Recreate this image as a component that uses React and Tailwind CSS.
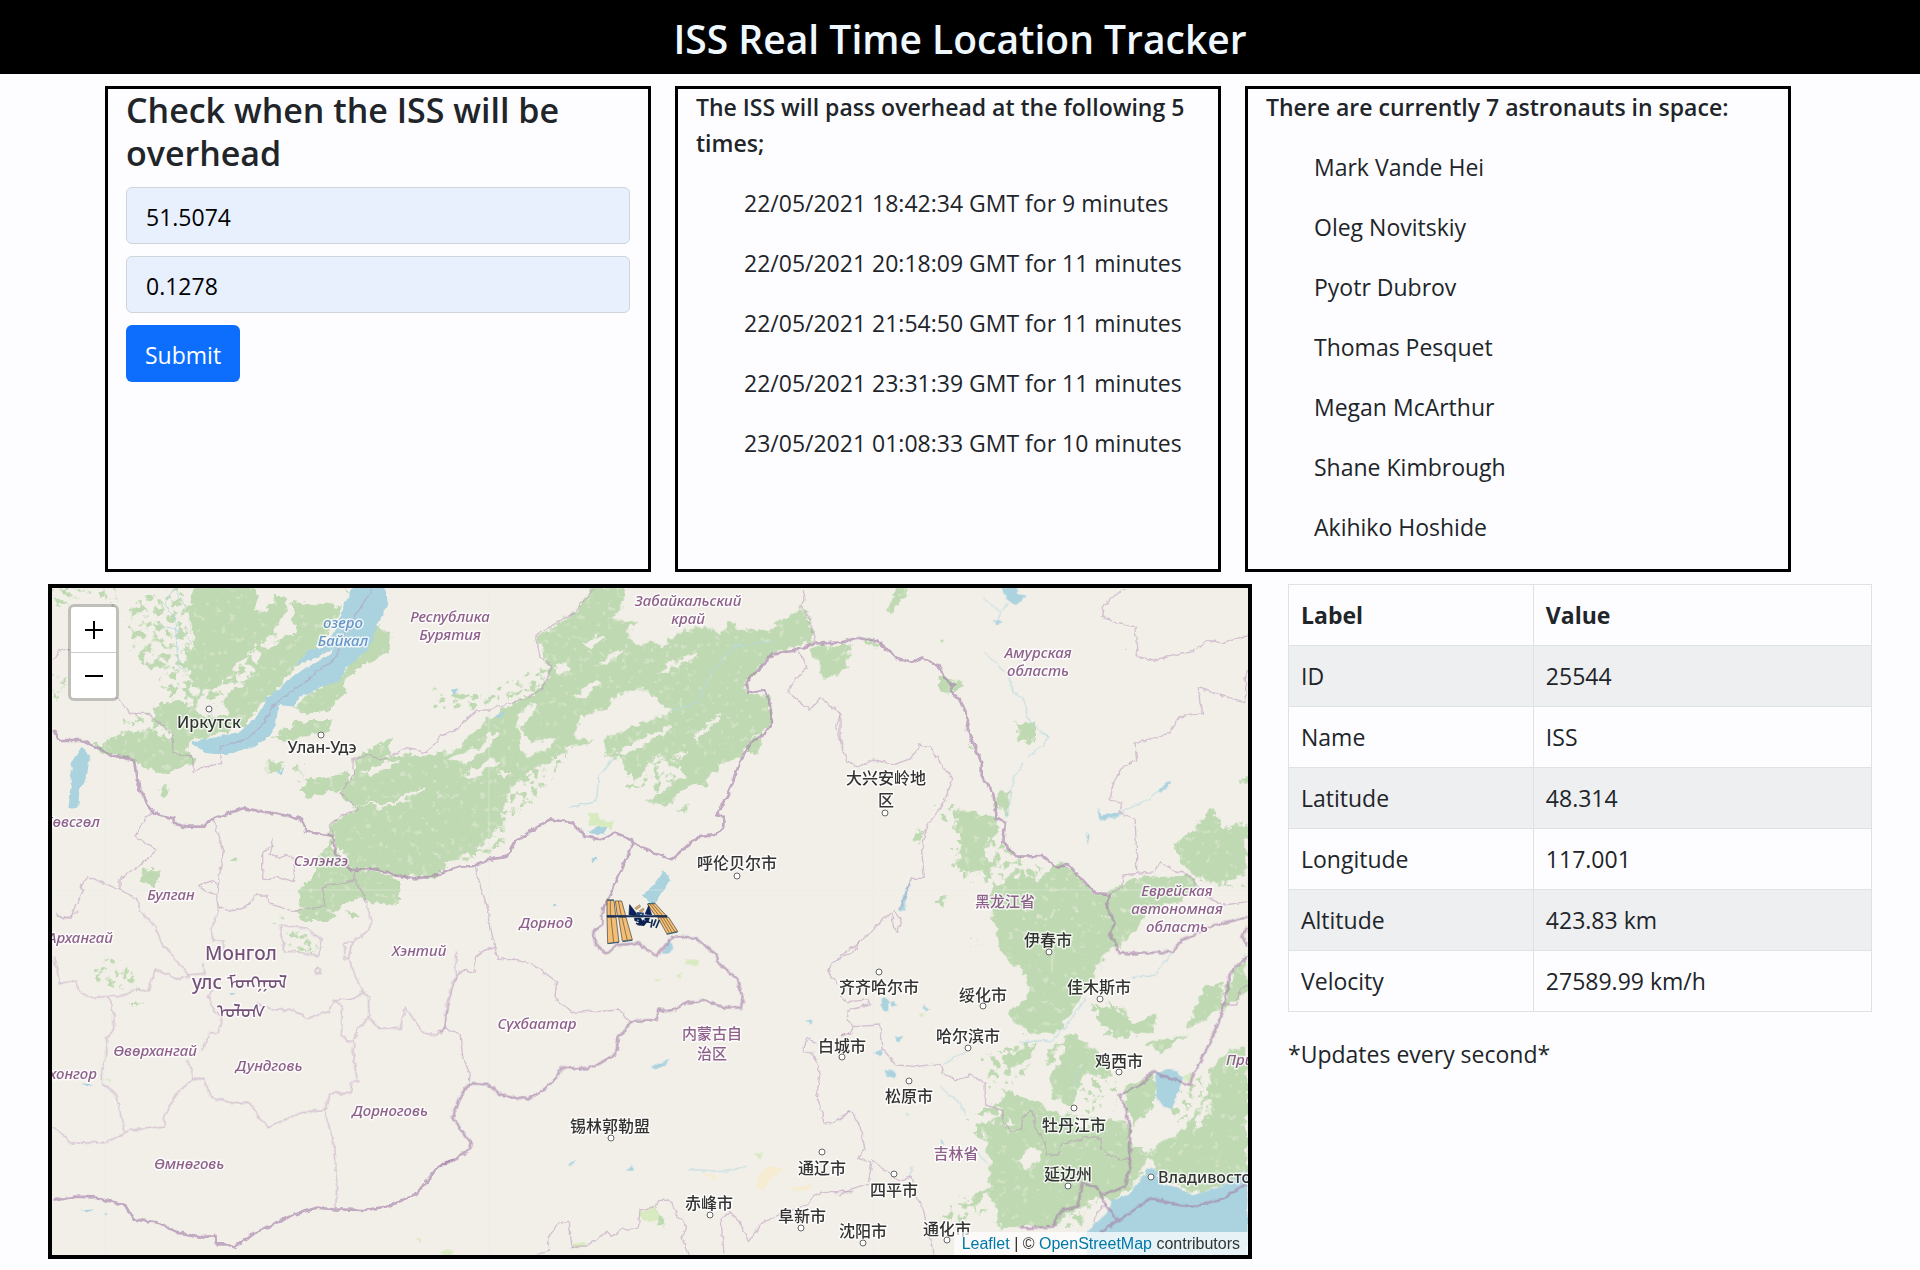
import React from "react";

const PASSES = [
  "22/05/2021 18:42:34 GMT for 9 minutes",
  "22/05/2021 20:18:09 GMT for 11 minutes",
  "22/05/2021 21:54:50 GMT for 11 minutes",
  "22/05/2021 23:31:39 GMT for 11 minutes",
  "23/05/2021 01:08:33 GMT for 10 minutes",
];

const ASTRONAUTS = [
  "Mark Vande Hei",
  "Oleg Novitskiy",
  "Pyotr Dubrov",
  "Thomas Pesquet",
  "Megan McArthur",
  "Shane Kimbrough",
  "Akihiko Hoshide",
];

const TELEMETRY = [
  ["ID", "25544"],
  ["Name", "ISS"],
  ["Latitude", "48.314"],
  ["Longitude", "117.001"],
  ["Altitude", "423.83 km"],
  ["Velocity", "27589.99 km/h"],
];

// The map is cut into six tiles; path data is in tile units, three to a map unit.
const TILES = [
  {
    x: 40,
    y: 570,
    forest:
      "M465,50 L625,50 L655,75 L640,130 L690,110 L705,75 L740,75 L745,110 L700,190 L640,230 L590,290 L560,320 L520,360 L460,350 L440,280 L470,200 L440,130Z M757,95 L905,112 L880,160 L840,230 L770,290 L720,350 L680,390 L610,460 L560,430 L560,370 L620,330 L680,240 L740,195 L768,190Z M345,410 L380,395 L440,400 L480,430 L520,445 L600,420 L650,430 L610,475 L450,510 L430,555 L400,550 L395,490 L340,450Z M160,530 L240,495 L320,480 L395,500 L400,550 L460,555 L455,580 L380,610 L310,595 L290,570 L200,550Z M985,150 L1050,185 L1045,250 L960,290 L920,330 L915,370 L860,420 L800,435 L765,410 L830,360 L900,320 L930,280Z M700,500 L780,450 L870,450 L875,485 L800,500 L730,515Z M680,575 L735,575 L700,610 L680,610Z M780,660 L800,630 L930,610 L930,650 L800,685Z M950,560 L1060,500 L1040,560 L1210,550 L1210,900 L1180,920 L1100,920 L1040,905 L940,900 L880,840 L865,770 L950,715 L900,670 L940,620Z M880,800 L830,870 L820,920 L770,960 L790,1050 L850,1050 L900,1010 L950,985 L1000,1000 L1080,1000 L1080,930 L1000,900 L930,895Z M305,900 L370,895 L360,930 L340,950 L310,940Z M355,655 L385,640 L385,675 L360,670Z M570,870 L600,862 L595,875 L572,880Z",
    sparse:
      "M270,90 L450,58 L470,330 L560,300 L640,230 L720,180 L700,300 L560,400 L440,420 L340,300 L280,240Z M38,58 L230,58 L240,100 L150,70 L60,110Z M38,310 L90,330 L60,390 L38,380Z M1180,360 L1260,390 L1260,430 L1190,410Z M240,460 L330,430 L390,480 L250,500Z M740,600 L810,580 L790,630Z M905,60 L940,60 L925,75Z",
    clearing: "M960,610 L1050,570 L1080,575 L1010,610Z M950,705 L1040,700 L1160,650 L1150,665 L1040,712Z",
    water:
      "M940,50 L1035,50 L1045,105 L1010,170 L1000,210 L985,240 L920,290 L900,330 L850,350 L775,380 L765,410 L715,405 L710,450 L690,500 L640,530 L560,555 L500,550 L450,518 L600,485 L650,440 L680,385 L740,335 L800,290 L860,260 L880,238 L800,275 L765,290 L800,245 L850,230 L880,190 L910,110Z M125,530 L150,560 L140,620 L118,660 L115,710 L85,715 L95,650 L95,575Z M712,610 L735,585 L725,612Z M1235,360 L1252,355 L1252,370 L1240,372Z",
    river: "M400,58 L375,100 L405,150 L415,290 L440,305 M355,168 L400,175 L430,190 L460,215 M410,70 L440,110 M510,425 L525,445",
    border:
      "M40,480 L55,510 L125,510 L215,555 L285,572 L298,660 L340,728 L400,745 L402,762 L445,770 L490,770 L520,745 L610,715 L690,728 L780,745 L800,785 L880,798 L885,850 L935,900 L1010,897 L1060,915 L1120,925 L1180,920 L1200,914",
    region:
      "M40,270 L55,245 L90,235 M230,380 L270,430 L325,430 L395,490 L400,550 L458,558 L460,608 L500,590 L545,580 L540,530 L610,510 L660,475 L700,405 L790,340 L890,260 L905,205 L995,58 M340,728 L315,745 L285,800 L350,840 L300,885 L240,925 L240,960 L290,985 L300,1020 M240,960 L145,920 L120,950 L130,965 L105,1010 L90,1045 L45,1035 M520,745 L535,800 L550,840 L535,940 L530,975 L535,1020 M535,940 L515,932 L475,945 L490,960 L530,975 M535,1010 L585,1025 L630,1000 L650,975 L680,975 L685,1000 L755,1022 L855,1010 L845,950 L895,940 L940,930 L945,900 M695,805 L700,825 L668,850 L668,930 L715,920 L760,935 L765,870 L740,855 L715,865 L690,850 L700,825 M943,930 L970,970 L985,1020 M885,798 L865,770 L900,740 L955,715 L900,670 L945,610 L935,570 L990,555 L1020,570 L1100,535 L1160,548 L1200,500",
  },
  {
    x: 440,
    y: 570,
    forest:
      "M460,50 L555,50 L550,110 L510,150 L585,150 L565,200 L600,235 L630,210 L660,235 L710,190 L790,170 L840,190 L880,155 L900,180 L990,175 L1080,110 L1110,150 L1120,215 L1000,250 L920,335 L925,370 L990,375 L990,470 L920,525 L900,570 L850,570 L790,650 L730,650 L690,705 L620,695 L680,650 L740,620 L700,570 L640,560 L590,640 L540,570 L500,555 L490,510 L560,480 L690,425 L620,360 L540,365 L500,420 L420,440 L400,500 L470,515 L390,530 L330,570 L250,620 L210,660 L180,770 L90,850 L0,890 L-20,895 L-20,550 L60,520 L130,460 L200,410 L310,350 L330,290 L290,200 L400,130Z M1110,230 L1235,225 L1220,300 L1150,330 L1140,290Z M920,525 L965,500 L955,545 L920,545Z M715,715 L745,710 L730,725Z",
    clearing:
      "M20,570 L120,530 L160,480 L180,490 L130,550 L60,580Z M70,620 L150,560 L180,575 L100,630Z M400,380 L470,330 L490,340 L420,385Z M230,440 L270,400 L290,410 L240,480 L270,520 L350,500 L340,530 L270,560 L240,550Z M520,545 L640,490 L680,470 L690,480 L560,555Z M645,575 L690,570 L695,600 L670,620Z M170,600 L210,605 L190,630Z M0,520 L60,500 L90,480 L50,540 L0,550Z M830,430 L850,435 L840,445Z M340,290 L380,280 L390,300 L350,310Z M430,220 L480,190 L490,205 L445,240Z M480,275 L550,235 L555,245 L490,285Z M640,310 L740,260 L770,245 L770,260 L690,300Z M700,555 L740,540 L720,570Z M760,500 L830,440 L835,448 L770,515Z",
    sparse:
      "M0,370 L150,380 L250,320 L330,300 L310,360 L120,410 L0,400Z M240,640 L420,520 L330,640 L280,700 L200,760 L200,830 L100,870 L0,890 L90,830 L180,780Z M620,300 L760,270 L700,340Z M560,560 L850,560 L780,640 L580,660Z M350,290 L520,180 L500,300 L400,380Z M0,560 L200,560 L60,640 L0,640Z",
    scrub: "M445,730 L475,730 L480,750 L520,755 L515,778 L450,765Z",
    water:
      "M672,900 L690,930 L640,1005 L608,975 L640,945Z M445,785 L480,768 L502,772 L490,795 L450,790Z M455,860 L472,865 L460,880Z M165,440 L200,420 L180,445Z M340,1000 L355,1006 L340,1010Z",
    river: "M385,712 L470,695 L475,620 L520,565 M700,420 L770,400 L820,300 L880,230 L1000,212",
    border:
      "M0,908 L60,890 L105,888 L145,870 L200,860 L225,815 L270,785 L330,748 L400,760 L435,800 L480,808 L525,788 L575,808 L580,820 L650,852 L695,868 L770,803 L825,795 L850,770 L850,738 L830,732 L865,670 L895,590 L925,525 L990,475 L995,440 L985,375 L965,360 L925,368 L920,335 L1000,250 L1060,243 L1130,220 L1200,218 M580,820 L512,970 L487,1020",
    region:
      "M0,498 L50,480 L110,420 L150,420 L200,400 L260,385 L310,355 L335,290 L300,260 L285,195 L400,130 L460,58 M105,888 L125,960 L145,1020 M1090,58 L1095,90 L1085,110 L1110,150 L1125,215 M1075,245 L1100,290 L1040,365 L1080,395 L1110,420 L1140,383 L1200,430 L1190,470 L1200,520",
  },
  {
    x: 840,
    y: 570,
    forest:
      "M180,50 L205,58 L160,125 L140,120Z M0,220 L35,225 L10,300 L0,300Z M70,210 L130,225 L110,235 L70,220Z M295,320 L370,340 L330,370 L300,365Z M530,460 L585,455 L585,515 L535,510Z M480,660 L510,670 L500,740 L465,700Z M385,515 L405,535 L390,540Z M345,720 L470,740 L470,790 L430,830 L445,900 L380,905 L350,890 L370,820 L350,780Z M1000,830 L1070,770 L1110,715 L1150,770 L1222,760 L1222,900 L1150,940 L1090,930 L1040,900Z M460,960 L550,910 L600,930 L650,880 L700,900 L760,970 L800,980 L800,1050 L470,1050 L440,1000Z M800,970 L900,920 L1060,920 L1080,960 L1000,1000 L860,1050 L800,1050Z M855,230 L870,238 L858,243Z M1195,630 L1222,615 L1222,640 L1205,640Z M240,775 L260,775 L235,815 L220,805Z",
    sparse:
      "M300,720 L360,710 L480,800 L560,880 L620,900 L560,960 L460,960 L340,890 L360,800Z M280,990 L330,980 L320,1010Z M1080,930 L1222,900 L1222,960Z M295,210 L320,215 L310,225Z",
    water:
      "M485,50 L530,50 L535,75 L558,80 L525,105 L500,90Z M770,715 L785,735 L840,728 L835,742 L780,752Z M955,665 L990,628 L992,640 L965,668Z M740,785 L750,800 L742,825Z M215,925 L200,985 L195,1020 L178,1025 L190,970Z M455,150 L490,155 L470,162Z",
    river:
      "M505,100 L480,130 L470,160 M435,250 L510,320 L520,370 L548,380 L565,450 L625,500 L610,525 L560,565 M550,580 L520,625 L510,700 L497,745 M840,728 L920,690 L990,635 M430,85 L480,125 M600,490 L625,500",
    border:
      "M0,218 L50,203 L110,213 L170,263 L215,278 L245,263 L300,290 L310,320 L340,345 L330,362 L360,390 L375,420 L385,445 L380,475 L405,530 L425,580 L425,620 L460,670 L470,745 L495,755 L490,815 L530,860 L610,858 L650,893 L685,883 L765,970 L810,972 L800,1010 L806,1020",
    region:
      "M0,425 L0,500 L20,575 L55,590 L100,570 L165,582 L215,565 L240,525 L270,532 L338,630 L310,700 L260,770 L245,840 L253,925 L215,925 L180,1020 M860,60 L820,75 L790,110 L785,140 L830,160 L885,170 L892,260 L940,270 L1060,245 L1105,208 L1150,220 L1222,195 M1222,300 L1215,330 L1222,370 L1210,395 L1140,375 L1075,353 L1080,400 L1090,430 L1020,440 L985,490 L885,520 L890,570 L850,590 L820,640 L810,690 L845,700 L840,730 L885,745 L890,850 L890,910 L850,915 L845,950 L810,970 M890,910 L945,905 L960,875 L1000,900 L1050,915 L1090,975 L1150,1005 L1222,995",
  },
  {
    x: 40,
    y: 910,
    forest: "M770,0 L870,0 L890,20 L860,30 L780,25Z M920,0 L960,20 L940,28Z M265,280 L310,275 L280,290Z M770,110 L800,115 L785,125Z M755,75 L775,65 L770,80Z",
    sparse: "M170,170 L230,140 L290,200 L300,240 L200,230Z M750,60 L850,90 L830,130 L760,120Z M710,30 L740,20 L730,50Z",
    scrub: "M1200,1030 L1220,1020 L1240,1025 L1235,1035 L1200,1035Z M1125,982 L1145,988 L1140,998Z M195,505 L220,510 L205,515Z",
    water: "M120,902 L160,898 L140,907Z M192,910 L202,910 L197,920Z M125,520 L160,522 L140,528Z M570,249 L585,250 L578,256Z",
    border:
      "M40,872 L105,860 L160,862 L255,885 L280,928 L350,937 L420,970 L480,983 L530,975 L530,1003 L570,1003 L583,1013 L640,970 L760,915 L830,893 L880,898 L975,900 L1050,888 L1130,850 L1195,770 L1240,748",
    region:
      "M45,10 L75,25 L115,5 M298,0 L345,50 L365,100 L445,195 L495,190 L490,160 M535,0 L512,60 L520,90 L548,95 L548,120 M40,140 L62,225 L110,210 L115,240 L145,262 L250,258 L290,235 L325,243 L345,180 L420,208 L450,198 M205,262 L222,315 L220,360 L200,385 L200,430 L187,470 L187,520 L230,555 L252,665 M40,655 L60,665 L98,700 L200,697 L270,660 L373,652 L372,625 L405,555 L455,510 L455,480 L440,450 M455,510 L490,505 L510,560 L575,578 L630,577 L660,630 L685,650 L780,610 L855,598 L870,550 L932,547 L935,518 L953,515 L938,430 L943,395 M480,422 L490,420 L508,368 L535,368 L545,320 L520,300 L505,260 L515,240 M650,280 L700,298 L765,302 L800,325 L865,305 L880,270 L940,265 L970,245 L925,150 L935,100 L980,65 L995,30 L985,0 M885,270 L907,290 L905,370 L920,392 L940,395 L955,355 L987,320 L985,260 L970,245 M935,95 L915,100 L913,145 L925,150 M987,320 L1020,358 L1080,355 L1097,293 L1150,370 L1190,375 L1215,350 L1220,280 L1245,200 L1250,125 M720,45 L800,55 L847,90 L835,138 L770,125 L735,125Z M853,600 L870,660 L885,720 L890,820 L887,895 M824,182 L832,172 L842,178 L840,190 L828,190Z",
  },
  {
    x: 440,
    y: 910,
    forest: "M640,895 L655,895 L675,950 L650,945Z",
    scrub:
      "M595,910 L640,890 L655,910 L650,935 L610,935Z M410,1000 L435,995 L440,1008 L395,1010Z M945,730 L968,730 L960,750Z M735,148 L775,150 L770,165 L735,165Z M640,210 L665,205 L655,215Z M705,195 L730,190 L720,205Z",
    sand: "M985,768 L1030,775 L1000,800 L970,840 L948,830 L955,800Z M1050,832 L1120,825 L1110,838 L1055,840Z M785,790 L835,800 L825,812Z",
    water: "M665,130 L688,92 L700,105 L685,132Z M632,470 L690,445 L675,468 L650,475Z M382,765 L410,752 L395,768Z M557,782 L575,765 L582,782Z M1095,335 L1118,328 L1110,340Z",
    river: "M745,778 L860,785 L920,768",
    border:
      "M487,0 L487,45 L460,65 L465,100 L500,132 L530,105 L595,100 L648,138 L700,80 L735,78 L770,88 L830,135 L830,155 L890,205 L910,270 L905,293 L850,292 L800,272 L740,278 L690,305 L655,298 L647,330 L590,332 L570,340 L535,385 L528,430 L480,460 L440,475 L400,475 L362,472 L350,505 L310,540 L265,568 L175,552 L145,522 L95,520 L70,540 L37,625 L95,700 L90,717 L40,750 L0,768",
    region:
      "M145,0 L153,60 L173,148 L205,145 L280,163 L350,215 L345,262 L395,308 L535,297 L570,340 M0,365 L15,350 L22,290 L50,195 L75,178 L102,187 L107,140 L135,120 L165,113 M0,365 L15,350 L60,375 L70,450 L90,487 L88,515 M1200,375 L1240,370 M1260,90 L1240,125 L1175,160 L1165,185 L1190,220 M1130,400 L1100,385 L1090,425 L1120,430 L1140,490 L1130,560 L1150,610 L1150,643 L1190,635 L1235,603 M290,1035 L325,1020 L327,980 L355,940 L388,937 L395,1010 L440,1008 L500,965 L515,982 L545,958 L595,955 L600,900 L650,888 L655,872 L690,870 L715,920 L740,950 L725,985 L745,1035 M852,1035 L843,925 L870,905 L900,935 L925,995 L965,940 L1010,915 L1100,885 L1120,855 L1170,845 L1240,845",
  },
  {
    x: 840,
    y: 910,
    forest:
      "M450,0 L810,0 L830,100 L780,150 L770,190 L720,260 L680,330 L640,370 L560,370 L500,310 L560,270 L560,200 L480,120Z M800,-10 L950,-10 L900,40 L830,120Z M760,290 L830,290 L870,340 L950,310 L940,370 L870,365 L830,390 L790,340Z M920,400 L1040,370 L960,430Z M1090,230 L1150,220 L1140,300 L1040,360 L1070,280Z M1220,130 L1222,240 L1150,310 L1160,230Z M490,440 L590,400 L570,450 L500,480Z M620,420 L700,370 L790,440 L820,500 L730,490 L700,590 L640,560Z M490,540 L560,560 L620,600 L720,620 L870,640 L870,740 L860,840 L780,860 L700,900 L640,950 L540,950 L480,960 L450,850 L370,900 L400,860 L450,830 L450,760 L430,650 L480,620Z M1222,410 L1222,780 L1140,830 L1050,850 L960,800 L920,740 L960,700 L1050,640 L1100,560 L1110,480 L1170,420Z M850,540 L940,490 L950,560 L930,600 L880,650Z M870,710 L930,720 L900,800 L820,870 L780,860 L860,820Z",
    clearing:
      "M640,450 L660,400 L680,400 L650,470 L600,540 L560,540Z M560,720 L590,700 L600,750 L560,780 L530,760Z M690,620 L760,640 L720,670Z M800,520 L830,600 L780,610Z M1080,600 L1110,560 L1100,620 L1060,670Z M500,620 L530,640 L500,650Z",
    sparse:
      "M440,430 L600,390 L560,500 L480,540 L440,500Z M400,610 L490,570 L540,640 L470,720 L400,670Z M720,500 L840,520 L830,600 L740,600Z M740,270 L860,290 L900,380 L800,380Z M1000,600 L1090,490 L1100,540 L1020,650Z M640,940 L740,870 L780,870 L720,960Z M300,930 L380,860 L450,900 L380,940Z M560,690 L700,660 L640,760Z M380,90 L430,90 L400,110Z",
    scrub: "M1030,495 L1055,490 L1055,515 L1035,512Z M235,315 L255,305 L245,322Z",
    water:
      "M945,490 L990,475 L1030,500 L1010,560 L995,598 L970,590 L950,560Z M740,965 L800,910 L820,865 L865,855 L930,770 L950,780 L960,820 L1000,830 L1060,855 L1140,830 L1222,780 L1222,1040 L740,1040Z M125,265 L145,265 L145,305 L125,295Z M150,270 L172,285 L155,290Z M130,480 L170,485 L165,505 L145,500Z M97,430 L130,418 L120,435Z M165,380 L190,378 L175,400Z M250,285 L268,300 L255,305Z M305,685 L315,700 L308,705Z M197,608 L208,615 L200,618Z",
    river: "M997,130 L945,195 L880,205 M740,260 L670,360 M540,395 L640,390 L670,350 M715,470 L705,530 M300,530 L360,580 L378,620 M310,460 L380,425 M215,770 L210,800 M410,720 L440,760",
    border:
      "M805,0 L825,40 L810,70 L840,130 L900,130 L1000,125 L1020,95 L1110,50 L1222,20 M1222,140 L1170,190 L1150,290 L1135,340 L1120,370 L1095,430 L1060,490 L1050,525 L935,485 L910,520 L880,535 L838,555 L855,590 L870,660 L870,760 L855,830 L785,855 L800,890 L835,932 L930,865 L1000,882 L1060,890 L1150,865 L1222,820 M540,955 L640,950 L665,900 L715,890 L725,820 L768,830 L785,855 M1222,50 L1207,80 L1222,110 M835,932 L780,965",
    region:
      "M0,140 L60,95 L155,5 L160,50 L172,70 L183,30 L165,0 M40,350 L120,345 L130,420 L170,465 L230,470 L300,460 L310,495 L350,510 L390,495 L435,520 L437,585 L485,600 L490,635 L515,665 L545,655 L548,625 L575,600 L590,660 L615,700 L620,735 L655,735 L665,700 L720,690 L740,680 L780,685 L785,720 L840,750 L870,745 M0,255 L20,275 L85,270 L90,285 L25,300 L22,330 L40,350 L25,375 L0,372 M0,620 L35,603 L60,650 L75,720 L55,745 L95,760 L85,820 L40,835 L0,855 M95,750 L150,790 L180,815 L215,800 L235,870 L250,900 L262,960 L283,1035 M1222,225 L1200,240 L1190,285 L1150,285 M760,940 L770,910 L800,880",
  },
];

const PLACES = [
  ["Иркутск", 209, 728, 209, 709],
  ["Улан-Удэ", 322, 753, 321, 735],
  ["呼伦贝尔市", 737, 869, 737, 876],
  ["大兴安岭地", 886, 784],
  ["区", 886, 806, 885, 813],
  ["锡林郭勒盟", 610, 1132, 611, 1138],
  ["通辽市", 822, 1174, 822, 1152],
  ["赤峰市", 709, 1209, 710, 1215],
  ["阜新市", 802, 1222, 801, 1228],
  ["齐齐哈尔市", 879, 993, 879, 972],
  ["绥化市", 983, 1001, 983, 1006],
  ["哈尔滨市", 968, 1042, 968, 1048],
  ["白城市", 842, 1052, 842, 1057],
  ["松原市", 909, 1102, 909, 1081],
  ["伊春市", 1048, 946, 1049, 952],
  ["佳木斯市", 1099, 993, 1100, 999],
  ["鸡西市", 1119, 1067, 1119, 1072],
  ["牡丹江市", 1074, 1131, 1074, 1108],
  ["延边州", 1068, 1180, 1068, 1186],
  ["四平市", 894, 1196, 894, 1174],
  ["沈阳市", 863, 1237, 863, 1243],
  ["通化市", 947, 1235, 947, 1240],
];

const REGIONS = [
  ["Республика", 450, 622],
  ["Бурятия", 450, 640],
  ["Сэлэнгэ", 321, 866],
  ["Булган", 171, 900],
  ["Забайкальский", 688, 606],
  ["край", 688, 624],
  ["Дорнод", 546, 928],
  ["Амурская", 1038, 658],
  ["область", 1038, 676],
  ["Еврейская", 1177, 896],
  ["автономная", 1177, 914],
  ["область", 1177, 932],
  ["Хэнтий", 419, 956],
  ["Өвөрхангай", 155, 1056],
  ["Дундговь", 269, 1071],
  ["Дорноговь", 390, 1116],
  ["Өмнөговь", 189, 1169],
  ["Сүхбаатар", 537, 1029],
];

const PROVINCES = [
  ["黑龙江省", 1005, 907],
  ["内蒙古自", 712, 1039],
  ["治区", 712, 1059],
  ["吉林省", 956, 1159],
];

function Layer({ name, ...paint }) {
  return (
    <g {...paint}>
      {TILES.filter((tile) => tile[name]).map((tile) => (
        <path
          key={`${tile.x}-${tile.y}`}
          transform={`translate(${tile.x} ${tile.y}) scale(0.33333)`}
          d={tile[name]}
        />
      ))}
    </g>
  );
}

function Station() {
  return (
    <g transform="translate(590 880) scale(0.33333)" strokeLinejoin="round">
      <g fill="#f3bf74" stroke="#3b3a3a" strokeWidth="2">
        <path d="M51,61 L72,61 L77,107 L51,107Z" />
        <path d="M76,63 L95,63 L107,107 L82,107Z" />
        <path d="M51,112 L78,112 L87,186 L53,190Z" />
        <path d="M86,112 L108,112 L127,179 L97,183Z" />
        <path d="M172,72 L196,71 L229,107 L196,107Z" />
        <path d="M203,112 L236,112 L263,154 L231,162Z" />
      </g>
      <path
        d="M61,61 V107 M85,63 L94,107 M63,112 L71,188 M96,112 L112,181 M180,72 L207,107 M188,72 L218,107 M211,112 L239,160 M219,112 L247,158 M227,112 L255,156"
        fill="none"
        stroke="#5d4d3a"
        strokeWidth="2"
      />
      <path d="M53,191 L87,187 M98,185 L127,181 M230,163 L263,156 M52,60 L72,60 M174,71 L196,69" stroke="#2e5d73" strokeWidth="3" />
      <path d="M119,74 L139,100 L140,108 L117,104Z M165,103 L176,77 L185,104Z" fill="#0a1f5c" stroke="#071640" strokeWidth="2" />
      <path d="M134,84 L149,74 L152,80 L139,89Z M148,92 L160,84 L162,90 L152,99Z" fill="#d9a867" stroke="#514536" strokeWidth="1" />
      <path d="M140,96 L162,98 L160,112 L142,112Z" fill="#23406f" />
      <path d="M132,113 L152,113 L158,122 L166,113 L180,113 L176,124 L188,130 L170,128 L162,138 L142,136 L146,126 L134,123Z" fill="#0b2152" />
      <path d="M187,118 L183,143 M198,118 L190,138 M208,120 L198,144 M138,130 L150,134" stroke="#152c52" strokeWidth="5" />
      <path d="M141,120 L147,121 M163,104 L170,104 M150,104 L156,103 M160,118 L166,121" stroke="#9fc3d6" strokeWidth="3" />
      <path d="M50,109 L232,109" stroke="#14294f" strokeWidth="6" />
      <path d="M56,108 L226,108" stroke="#3d5c8a" strokeWidth="1" />
    </g>
  );
}

function MapCanvas() {
  return (
    <svg
      className="block h-full w-full"
      viewBox="52 588 1196 667"
      preserveAspectRatio="xMidYMid slice"
      role="img"
      aria-label="Map"
    >
      <defs>
        <filter id="coast" x="-5%" y="-5%" width="110%" height="110%">
          <feTurbulence type="fractalNoise" baseFrequency="0.12" numOctaves="3" seed="4" result="noise" />
          <feDisplacementMap in="SourceGraphic" in2="noise" scale="12" xChannelSelector="R" yChannelSelector="G" />
        </filter>
        <filter id="shore" x="-5%" y="-5%" width="110%" height="110%">
          <feTurbulence type="fractalNoise" baseFrequency="0.15" numOctaves="2" seed="9" result="noise" />
          <feDisplacementMap in="SourceGraphic" in2="noise" scale="5" xChannelSelector="R" yChannelSelector="G" />
        </filter>
        <filter id="speckle" x="-5%" y="-5%" width="110%" height="110%">
          <feTurbulence type="fractalNoise" baseFrequency="0.13" numOctaves="3" seed="12" result="noise" />
          <feColorMatrix in="noise" type="matrix" values="0 0 0 0 0  0 0 0 0 0  0 0 0 0 0  9 0 0 0 -4.6" result="spots" />
          <feDisplacementMap in="SourceGraphic" in2="noise" scale="20" xChannelSelector="R" yChannelSelector="G" result="rough" />
          <feComposite in="rough" in2="spots" operator="in" />
        </filter>
        <filter id="glades" x="-5%" y="-5%" width="110%" height="110%">
          <feTurbulence type="fractalNoise" baseFrequency="0.14" numOctaves="3" seed="21" result="noise" />
          <feColorMatrix in="noise" type="matrix" values="0 0 0 0 0  0 0 0 0 0  0 0 0 0 0  0 9 0 0 -5.7" result="spots" />
          <feComposite in="SourceGraphic" in2="spots" operator="in" />
        </filter>
      </defs>
      <rect x="0" y="560" width="1300" height="720" fill="#f2efe9" />
      <Layer name="sand" fill="#f5ecd2" filter="url(#shore)" />
      <Layer name="sparse" fill="#bfdab2" filter="url(#speckle)" />
      <Layer name="forest" fill="#bfdab2" filter="url(#coast)" />
      <Layer name="forest" fill="#f0efe4" fillOpacity="0.35" filter="url(#glades)" />
      <Layer name="clearing" fill="#f2efe9" filter="url(#coast)" />
      <Layer name="scrub" fill="#d8eabf" filter="url(#shore)" />
      <Layer name="river" fill="none" stroke="#b9d9e0" strokeWidth="3" strokeLinejoin="round" filter="url(#shore)" />
      <Layer name="water" fill="#aad3df" filter="url(#shore)" />
      <path d="M105,588 V1255 M489,588 V1255 M873,588 V1255 M52,890 H1248" stroke="#e9e8e6" strokeWidth="1" opacity="0.5" />
      <Layer name="region" fill="none" stroke="#b592b8" strokeOpacity="0.5" strokeWidth="4" strokeLinejoin="round" filter="url(#shore)" />
      <Layer name="border" fill="none" stroke="#a380a8" strokeOpacity="0.62" strokeWidth="8" strokeLinejoin="round" filter="url(#shore)" />
      <g
        stroke="#ffffff"
        strokeOpacity="0.75"
        strokeWidth="3"
        strokeLinejoin="round"
        paintOrder="stroke"
        className="font-['Noto_Sans','Noto_Sans_CJK_SC',sans-serif] font-medium"
      >
        <g fill="#8d618b" className="text-[15px] italic" textAnchor="middle">
          {REGIONS.map(([text, x, y]) => (
            <text key={`${text}-${x}-${y}`} x={x} y={y}>{text}</text>
          ))}
          <text x="100" y="827" textAnchor="end">Хөвсгөл</text>
          <text x="113" y="943" textAnchor="end">Архангай</text>
          <text x="97" y="1079" textAnchor="end">Баянхонгор</text>
          <text x="1226" y="1065" textAnchor="start">При</text>
        </g>
        <g fill="#8d618b" className="text-[15px]" textAnchor="middle">
          {PROVINCES.map(([text, x, y]) => (
            <text key={text} x={x} y={y}>{text}</text>
          ))}
        </g>
        <g fill="#6795c8" className="text-[15px] italic" textAnchor="middle">
          <text x="343" y="628">озеро</text>
          <text x="343" y="646">Байкал</text>
        </g>
        <g fill="#75517a" className="text-[19px]">
          <text x="241" y="960" textAnchor="middle">Монгол</text>
          <text x="192" y="989">улс ᠮᠣᠩᠭᠣᠯ</text>
          <text x="241" y="1018" textAnchor="middle">ᠤᠯᠤᠰ</text>
        </g>
        <g fill="#333333" className="text-[16px]">
          {PLACES.map(([text, x, y]) => (
            <text key={text} x={x} y={y} textAnchor="middle">{text}</text>
          ))}
          <text x="1158" y="1183">Владивосток</text>
        </g>
      </g>
      <g fill="#ffffff" stroke="#666666" strokeWidth="1">
        {PLACES.filter((place) => place.length > 3).map(([text, , , x, y]) => (
          <circle key={text} cx={x} cy={y} r="3" />
        ))}
        <circle cx="1151" cy="1177" r="3" />
      </g>
      <Station />
    </svg>
  );
}

function Card({ children }) {
  return <section className="border-3 border-black px-[18px]">{children}</section>;
}

function LineList({ items }) {
  return (
    <ul className="pl-12">
      {items.map((item) => (
        <li key={item} className="mb-6">{item}</li>
      ))}
    </ul>
  );
}

export default function App() {
  return (
    <div className="min-h-screen bg-[#fdfdff] pb-3 font-['Open_Sans',sans-serif] text-[23px] leading-9 text-[#212529]">
      <header className="bg-black pt-3.5 pb-2.5 text-center">
        <h1 className="text-[39px] leading-[50px] font-semibold text-[#f0f8ff]">
          ISS Real Time Location Tracker
        </h1>
      </header>

      <div className="mt-3 mr-[129px] ml-[105px] grid grid-cols-3 gap-6">
        <Card>
          <h2 className="mb-3 text-[34px] leading-[43px] font-semibold">
            Check when the ISS will be overhead
          </h2>
          <form className="flex flex-col items-start gap-3" onSubmit={(event) => event.preventDefault()}>
            <input
              type="text"
              aria-label="Latitude"
              defaultValue="51.5074"
              className="h-[57px] w-full rounded-md border border-[#ced4da] bg-[#e8f0fe] px-[19px] pt-0.5 text-black"
            />
            <input
              type="text"
              aria-label="Longitude"
              defaultValue="0.1278"
              className="h-[57px] w-full rounded-md border border-[#ced4da] bg-[#e8f0fe] px-[19px] pt-0.5 text-black"
            />
            <button type="submit" className="h-[57px] rounded-md bg-[#0d6efd] px-[19px] pt-0.5 text-white">
              Submit
            </button>
          </form>
        </Card>
        <Card>
          <p className="mb-6 font-semibold">The ISS will pass overhead at the following 5 times;</p>
          <LineList items={PASSES} />
        </Card>
        <Card>
          <p className="mb-6 font-semibold">There are currently 7 astronauts in space:</p>
          <LineList items={ASTRONAUTS} />
        </Card>
      </div>

      <div className="mx-12 mt-3 grid grid-cols-[1204fr_584fr] items-start gap-9">
        <div className="relative h-[675px] overflow-hidden border-4 border-black bg-[#f2efe9]">
          <MapCanvas />
          <div className="absolute top-4 left-4 flex flex-col rounded-md border-3 border-black/20 bg-clip-padding">
            <button
              type="button"
              aria-label="Zoom in"
              className="flex h-[46px] w-[45px] items-center justify-center rounded-t-sm border-b border-[#cccccc] bg-white"
            >
              <svg className="h-[18px] w-[18px]" viewBox="0 0 18 18" stroke="#000" strokeWidth="2">
                <path d="M9 0V18M0 9H18" />
              </svg>
            </button>
            <button
              type="button"
              aria-label="Zoom out"
              className="flex h-[45px] w-[45px] items-center justify-center rounded-b-sm bg-white"
            >
              <svg className="h-[18px] w-[18px]" viewBox="0 0 18 18" stroke="#000" strokeWidth="2">
                <path d="M0 9H18" />
              </svg>
            </button>
          </div>
          <div className="absolute right-0 bottom-0 bg-white/70 px-2 font-['Liberation_Sans',sans-serif] text-[16px] leading-[23px] text-[#333333]">
            <a href="#leaflet" className="text-[#0078a8]">Leaflet</a>
            {" | © "}
            <a href="#osm" className="text-[#0078a8]">OpenStreetMap</a>
            {" contributors"}
          </div>
        </div>

        <div>
          <table className="mb-6 w-full border-collapse">
            <thead>
              <tr>
                <th className="h-[61px] w-[42%] border border-[#dee2e6] px-3 text-left font-bold">Label</th>
                <th className="h-[61px] border border-[#dee2e6] px-3 text-left font-bold">Value</th>
              </tr>
            </thead>
            <tbody>
              {TELEMETRY.map(([label, value]) => (
                <tr key={label} className="odd:bg-[#eeeff1]">
                  <td className="h-[61px] border border-[#dee2e6] px-3">{label}</td>
                  <td className="h-[61px] border border-[#dee2e6] px-3">{value}</td>
                </tr>
              ))}
            </tbody>
          </table>
          <p>*Updates every second*</p>
        </div>
      </div>
    </div>
  );
}
